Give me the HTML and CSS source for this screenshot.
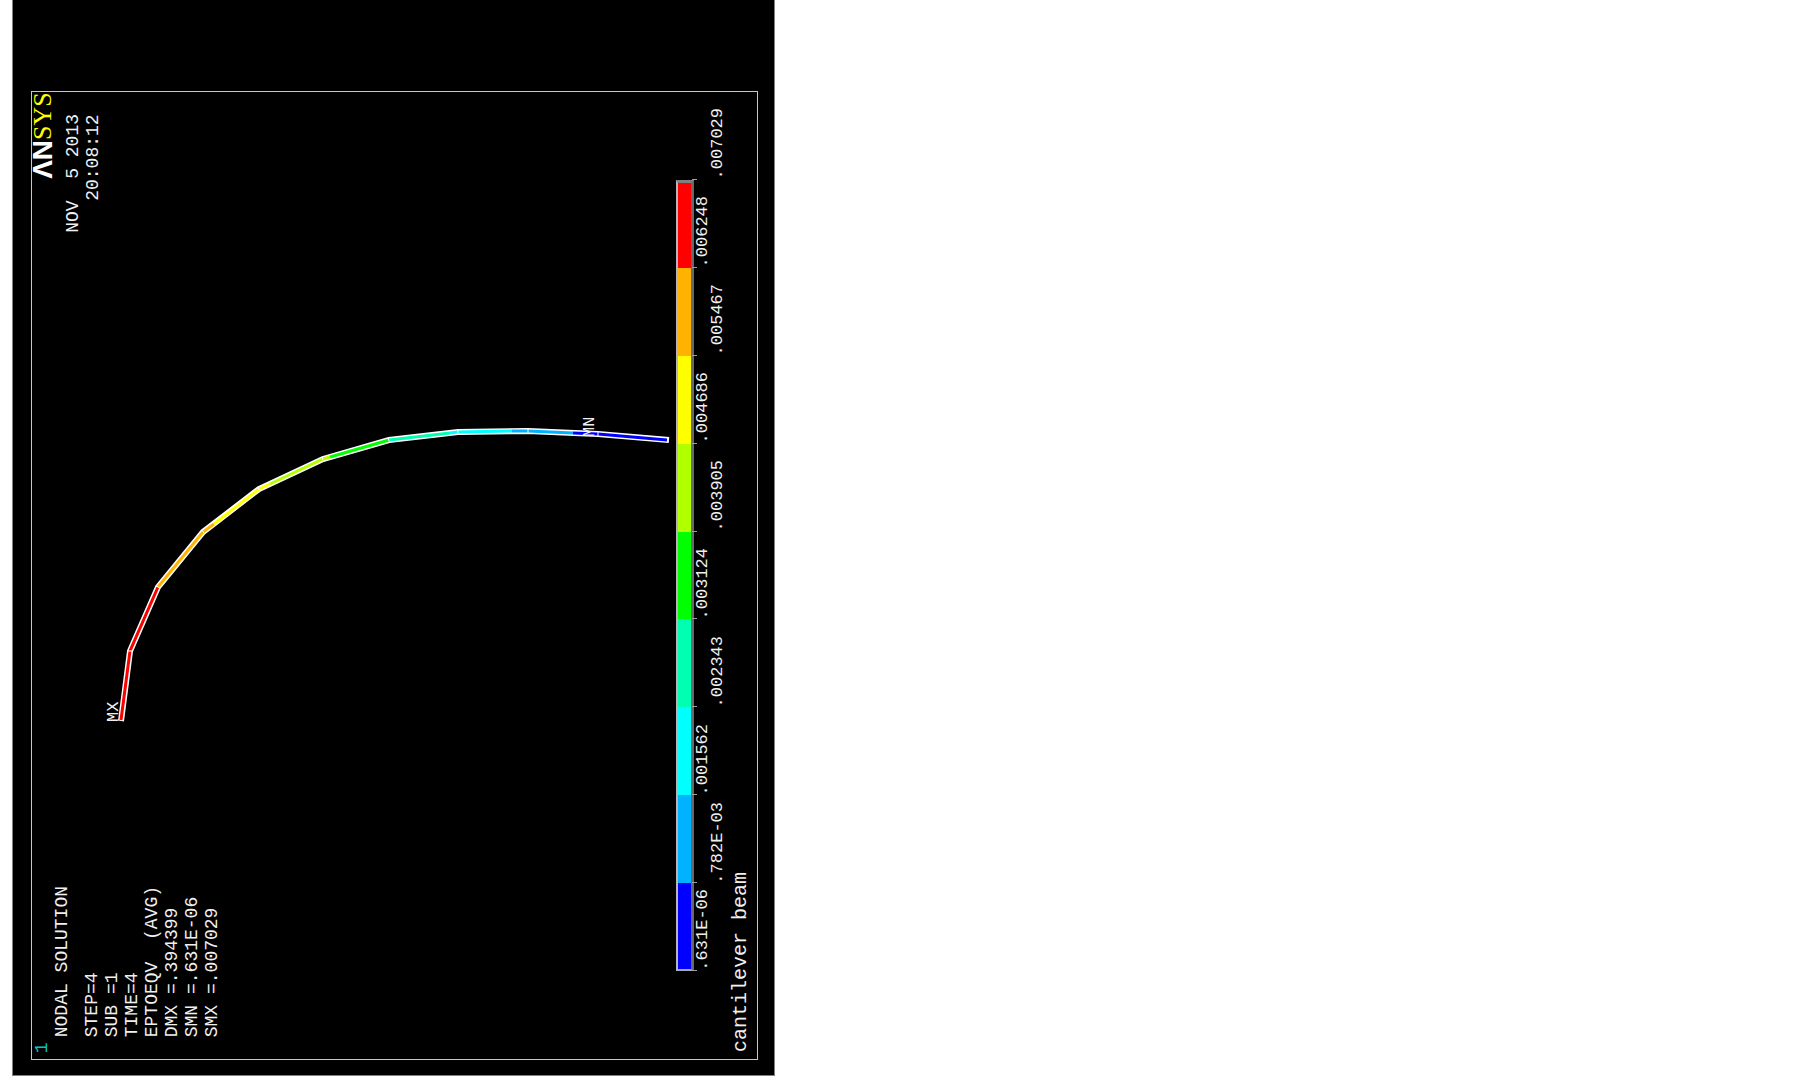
FILE: index.html
```html
<!DOCTYPE html>
<html lang="en">
<head>
    <meta charset="UTF-8">
    <meta name="viewport" content="width=device-width, initial-scale=1.0">
    <title>cantilever beam</title>
    <link rel="stylesheet" href="styles.css">
</head>
<body>

    <main class="sheet">
        <div class="frame">

            <!-- Deformed beam -->
            <svg class="plot" viewBox="0 0 725 967" role="img" aria-label="Deformed beam">
                <g transform="translate(-32 -92)">
                    <polyline class="outline" points="121,721 130,651 158,587 203,532 259,489 323,459 389,440 458,432 528,431 598,434 669,440" />
                    <g class="contour">
                        <polyline stroke="#ff0000" points="121,720 130,651 158,587" />
                        <polyline stroke="#ffb200" points="158,587 203,532 214,524" />
                        <polyline stroke="#ffff00" points="214,524 259,489 270,484" />
                        <polyline stroke="#b2ff00" points="270,484 323,459 330,457" />
                        <polyline stroke="#00ff00" points="330,457 389,440" />
                        <polyline stroke="#00ffb2" points="389,440 450,433" />
                        <polyline stroke="#00ffff" points="450,433 458,432 512,431" />
                        <polyline stroke="#00b2ff" points="512,431 528,431 573,433" />
                        <polyline stroke="#0000ff" points="573,433 598,434 667,440" />
                    </g>
                    <path class="nodes" d="M128 651h5M156 586l4 2M202 530l2 3M258 487l1 3M322 457l1 3M388 438l1 3M458 430v4M528 429v4M598 432v4" />
                    <text class="marker" transform="translate(118 722) rotate(-90)">MX</text>
                    <text class="marker" transform="translate(594 437) rotate(-90)">MN</text>
                </g>
            </svg>

            <div class="notes">
                <div class="stamp sideways">
                    <h1 class="logo"><span class="logo-an">ΛN</span><span class="logo-sys">SYS</span></h1>
                    <p>NOV  5 2013</p>
                    <p>20:08:12</p>
                </div>
                <div class="solution sideways">
                    <p class="window-number">1</p>
                    <h2>NODAL SOLUTION</h2>
                    <p>STEP=4</p>
                    <p>SUB =1</p>
                    <p>TIME=4</p>
                    <p>EPTOEQV  (AVG)</p>
                    <p>DMX =.394399</p>
                    <p>SMN =.631E-06</p>
                    <p>SMX =.007029</p>
                </div>
            </div>

            <!-- Contour legend, highest value first -->
            <ul class="legend">
                <li class="top"><span class="swatch"></span><span class="value sideways">.007029</span></li>
                <li><span class="swatch red"></span><span class="value sideways">.006248</span></li>
                <li><span class="swatch orange"></span><span class="value sideways">.005467</span></li>
                <li><span class="swatch yellow"></span><span class="value sideways">.004686</span></li>
                <li><span class="swatch lime"></span><span class="value sideways">.003905</span></li>
                <li><span class="swatch green"></span><span class="value sideways">.003124</span></li>
                <li><span class="swatch teal"></span><span class="value sideways">.002343</span></li>
                <li><span class="swatch cyan"></span><span class="value sideways">.001562</span></li>
                <li><span class="swatch sky"></span><span class="value sideways">.782E-03</span></li>
                <li><span class="swatch blue"></span><span class="value sideways">.631E-06</span></li>
            </ul>

            <p class="title sideways">cantilever beam</p>
        </div>
    </main>

</body>
</html>
```

FILE: styles.css
```css
* {
    margin: 0;
    padding: 0;
    box-sizing: border-box;
}

body {
    background: #fff;
    color: #f0f0f0;
    font-family: "Liberation Mono", "Courier New", monospace;
    font-size: 18px;
}

.sheet {
    display: flex;
    height: 100vh;
    aspect-ratio: 763 / 1076;
    margin-left: 12px;
    padding: 91px 16px 15px 18px;
    background: #000;
    border: solid #808080;
    border-width: 0 1px 1px 1px;
}

.frame {
    flex: 1;
    display: grid;
    grid-template-columns: 1fr auto auto;
    grid-template-rows: minmax(0, 1fr);
    border: 1px solid #c8c8c8;
}

/* text that reads from bottom to top */
.sideways {
    writing-mode: vertical-rl;
    transform: rotate(180deg);
}

.plot {
    grid-area: 1 / 1 / 2 / 4;
    width: 100%;
    height: 100%;
}

.outline {
    fill: none;
    stroke: #fff;
    stroke-width: 6;
}

.contour {
    fill: none;
    stroke-width: 3;
}

.nodes {
    fill: none;
    stroke: #fff;
    stroke-width: 1;
}

.marker {
    fill: #f0f0f0;
    font-size: 17px;
}

.notes {
    grid-area: 1 / 1 / 2 / 2;
    display: flex;
    flex-direction: column;
    justify-content: space-between;
    align-items: flex-start;
    line-height: 20px;
}

.notes p {
    white-space: pre;
}

.stamp {
    text-align: end;
}

.stamp p {
    padding-inline-end: 22px;
}

.logo {
    margin-block-end: 9px;
    line-height: 22px;
    font-weight: normal;
}

.logo-an {
    color: #fff;
    font: bold 28px/22px "Liberation Sans", Arial, sans-serif;
}

.logo-sys {
    color: #ff0;
    font: 26px/22px "Liberation Serif", "Times New Roman", serif;
}

.solution {
    padding-inline-start: 22px;
}

.solution h2 {
    margin-block-end: 10px;
    font-size: 18px;
    font-weight: normal;
}

.solution .window-number {
    margin-inline-start: -16px;
    color: #00c8c8;
}

.legend {
    grid-area: 1 / 2 / 2 / 3;
    display: grid;
    grid-template-rows: repeat(11, 1fr);
    list-style: none;
    font-size: 17px;
    line-height: 14px;
}

.legend li {
    position: relative;
    display: flex;
    align-items: flex-end;
}

/* tick at the lower end of every swatch */
.legend li::after {
    content: "";
    position: absolute;
    left: 16px;
    bottom: 0;
    width: 5px;
    height: 1px;
    background: #a0a0a0;
}

.swatch {
    width: 18px;
    height: 100%;
    border-left: 2px solid #b8b4b8;
    border-right: 3px solid #686868;
}

.top .swatch {
    height: 0;
    border: 0;
}

.value {
    margin-left: 2px;
}

.legend li:nth-child(odd) .value {
    margin-left: 17px;
}

.red { background: #ff0000; border-top: 3px solid #808080; }
.orange { background: #ffb200; }
.yellow { background: #ffff00; }
.lime { background: #b2ff00; }
.green { background: #00ff00; }
.teal { background: #00ffb2; }
.cyan { background: #00ffff; }
.sky { background: #00b2ff; }
.blue { background: #0000ff; border-bottom: 2px solid #a8a8a8; }

.title {
    grid-area: 1 / 3 / 2 / 4;
    padding-inline-start: 7px;
    font-size: 20px;
    line-height: 32px;
}
```
